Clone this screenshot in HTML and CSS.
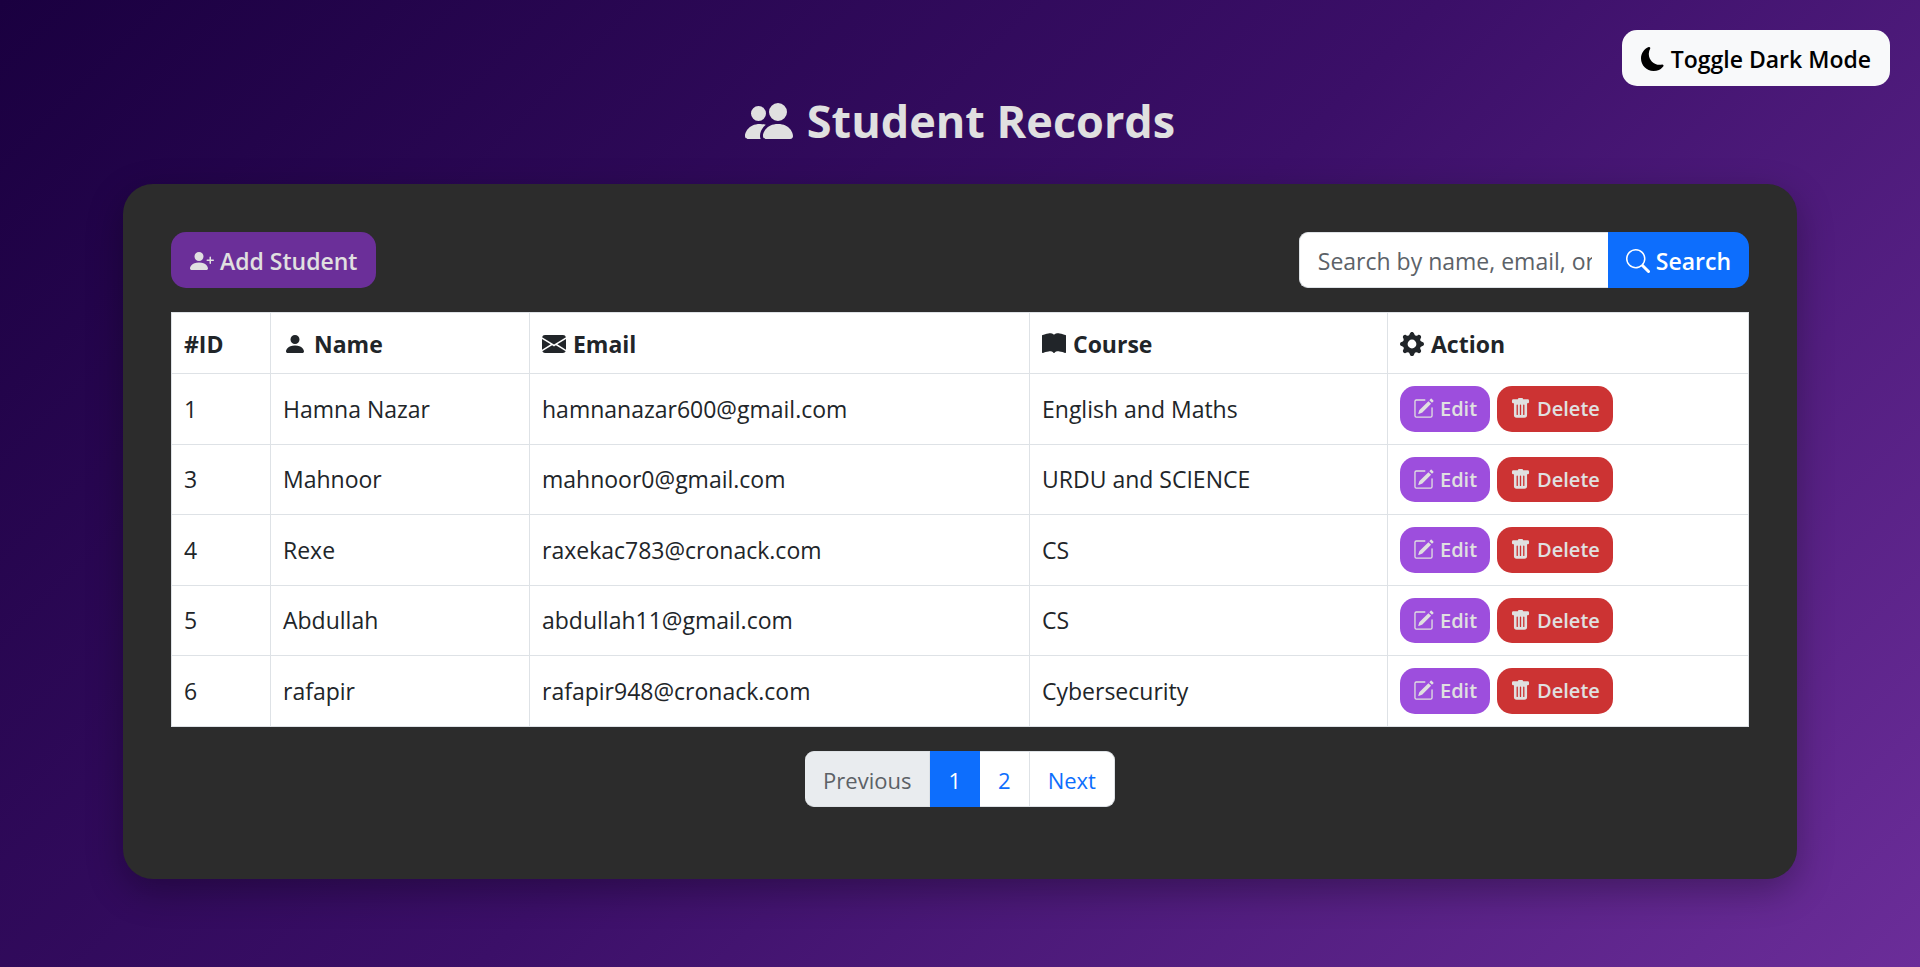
FILE: index.html
```
<!DOCTYPE html>
<html lang="en">
<head>
<meta charset="utf-8">
<title>Student Records</title>
<link rel="stylesheet" href="styles.css">
</head>
<body>
<svg class="sprite" aria-hidden="true">
  <symbol id="people" viewBox="0 0 16 16"><path d="M7 14s-1 0-1-1 1-4 5-4 5 3 5 4-1 1-1 1zm4-6a3 3 0 1 0 0-6 3 3 0 0 0 0 6m-5.784 6A2.24 2.24 0 0 1 5 13c0-1.355.68-2.75 1.936-3.72A6.3 6.3 0 0 0 5 9c-4 0-5 3-5 4s1 1 1 1zM4.5 8a2.5 2.5 0 1 0 0-5 2.5 2.5 0 0 0 0 5"/></symbol>
  <symbol id="moon" viewBox="0 0 16 16"><path d="M6 .278a.77.77 0 0 1 .08.858 7.2 7.2 0 0 0-.878 3.46c0 4.021 3.278 7.277 7.318 7.277q.792-.001 1.533-.16a.79.79 0 0 1 .81.316.73.73 0 0 1-.031.893A8.35 8.35 0 0 1 8.344 16C3.734 16 0 12.286 0 7.71 0 4.266 2.114 1.312 5.124.06A.75.75 0 0 1 6 .278"/></symbol>
  <symbol id="person-plus" viewBox="0 0 16 16"><path d="M1 14s-1 0-1-1 1-4 6-4 6 3 6 4-1 1-1 1zm5-6a3 3 0 1 0 0-6 3 3 0 0 0 0 6"/><path d="M13.5 5a.5.5 0 0 1 .5.5V7h1.5a.5.5 0 0 1 0 1H14v1.5a.5.5 0 0 1-1 0V8h-1.5a.5.5 0 0 1 0-1H13V5.5a.5.5 0 0 1 .5-.5"/></symbol>
  <symbol id="search" viewBox="0 0 16 16"><path d="M11.742 10.344a6.5 6.5 0 1 0-1.397 1.398h-.001q.044.06.098.115l3.85 3.85a1 1 0 0 0 1.415-1.414l-3.85-3.85a1 1 0 0 0-.115-.1zM12 6.5a5.5 5.5 0 1 1-11 0 5.5 5.5 0 0 1 11 0"/></symbol>
  <symbol id="person" viewBox="0 0 16 16"><path d="M3 14s-1 0-1-1 1-4 6-4 6 3 6 4-1 1-1 1zm5-6a3 3 0 1 0 0-6 3 3 0 0 0 0 6"/></symbol>
  <symbol id="envelope" viewBox="0 0 16 16"><path d="M.05 3.555A2 2 0 0 1 2 2h12a2 2 0 0 1 1.95 1.555L8 8.414zM0 4.697v7.104l5.803-3.558zM6.761 8.83l-6.57 4.027A2 2 0 0 0 2 14h12a2 2 0 0 0 1.808-1.144l-6.57-4.027L8 9.586zm3.436-.586L16 11.801V4.697z"/></symbol>
  <symbol id="book" viewBox="0 0 16 16"><path d="M8 1.783C7.015.936 5.587.81 4.287.94c-1.514.153-3.042.672-3.994 1.105A.5.5 0 0 0 0 2.5v11a.5.5 0 0 0 .707.455c.882-.4 2.303-.881 3.68-1.02 1.409-.142 2.59.087 3.223.877a.5.5 0 0 0 .78 0c.633-.79 1.814-1.019 3.222-.877 1.378.139 2.8.62 3.681 1.02A.5.5 0 0 0 16 13.5v-11a.5.5 0 0 0-.293-.455c-.952-.433-2.48-.952-3.994-1.105C10.413.809 8.985.936 8 1.783"/></symbol>
  <symbol id="gear" viewBox="0 0 16 16"><path d="M9.405 1.05c-.413-1.4-2.397-1.4-2.81 0l-.1.34a1.464 1.464 0 0 1-2.105.872l-.31-.17c-1.283-.698-2.686.705-1.987 1.987l.169.311c.446.82.023 1.841-.872 2.105l-.34.1c-1.4.413-1.4 2.397 0 2.81l.34.1a1.464 1.464 0 0 1 .872 2.105l-.17.31c-.698 1.283.705 2.686 1.987 1.987l.311-.169a1.464 1.464 0 0 1 2.105.872l.1.34c.413 1.4 2.397 1.4 2.81 0l.1-.34a1.464 1.464 0 0 1 2.105-.872l.31.17c1.283.698 2.686-.705 1.987-1.987l-.169-.311a1.464 1.464 0 0 1 .872-2.105l.34-.1c1.4-.413 1.4-2.397 0-2.81l-.34-.1a1.464 1.464 0 0 1-.872-2.105l.17-.31c.698-1.283-.705-2.686-1.987-1.987l-.311.169a1.464 1.464 0 0 1-2.105-.872zM8 10.93a2.929 2.929 0 1 1 0-5.86 2.929 2.929 0 0 1 0 5.858z"/></symbol>
  <symbol id="pencil" viewBox="0 0 16 16"><path d="M15.502 1.94a.5.5 0 0 1 0 .706L14.459 3.69l-2-2L13.502.646a.5.5 0 0 1 .707 0l1.293 1.293zm-1.75 2.456-2-2L4.939 9.21a.5.5 0 0 0-.121.196l-.805 2.414a.25.25 0 0 0 .316.316l2.414-.805a.5.5 0 0 0 .196-.12l6.813-6.814z"/><path fill-rule="evenodd" d="M1 13.5A1.5 1.5 0 0 0 2.5 15h11a1.5 1.5 0 0 0 1.5-1.5v-6a.5.5 0 0 0-1 0v6a.5.5 0 0 1-.5.5h-11a.5.5 0 0 1-.5-.5v-11a.5.5 0 0 1 .5-.5H9a.5.5 0 0 0 0-1H2.5A1.5 1.5 0 0 0 1 2.5z"/></symbol>
  <symbol id="trash" viewBox="0 0 16 16"><path d="M2.5 1a1 1 0 0 0-1 1v1a1 1 0 0 0 1 1H3v9a2 2 0 0 0 2 2h6a2 2 0 0 0 2-2V4h.5a1 1 0 0 0 1-1V2a1 1 0 0 0-1-1H10a1 1 0 0 0-1-1H7a1 1 0 0 0-1 1zm3 4a.5.5 0 0 1 .5.5v7a.5.5 0 0 1-1 0v-7a.5.5 0 0 1 .5-.5M8 5a.5.5 0 0 1 .5.5v7a.5.5 0 0 1-1 0v-7A.5.5 0 0 1 8 5m3 .5v7a.5.5 0 0 1-1 0v-7a.5.5 0 0 1 1 0"/></symbol>
</svg>

<button class="btn btn-light theme-toggle" type="button"><svg class="icon"><use href="#moon"/></svg> Toggle Dark Mode</button>

<main class="page">
  <h1 class="title"><svg class="icon"><use href="#people"/></svg> Student Records</h1>

  <section class="card">
    <div class="toolbar">
      <button class="btn btn-add" type="button"><svg class="icon"><use href="#person-plus"/></svg> Add Student</button>
      <form class="search">
        <input class="search-input" type="text" aria-label="Search students" placeholder="Search by name, email, or course">
        <button class="btn btn-search" type="submit"><svg class="icon"><use href="#search"/></svg> Search</button>
      </form>
    </div>

    <table class="records">
      <colgroup><col class="col-id"><col class="col-name"><col class="col-email"><col class="col-course"><col class="col-action"></colgroup>
      <thead>
        <tr>
          <th scope="col">#ID</th>
          <th scope="col"><svg class="icon"><use href="#person"/></svg> Name</th>
          <th scope="col"><svg class="icon"><use href="#envelope"/></svg> Email</th>
          <th scope="col"><svg class="icon"><use href="#book"/></svg> Course</th>
          <th scope="col"><svg class="icon"><use href="#gear"/></svg> Action</th>
        </tr>
      </thead>
      <tbody>
        <tr>
          <td>1</td><td>Hamna Nazar</td><td>hamnanazar600@gmail.com</td><td>English and Maths</td>
          <td><div class="actions"><button class="btn btn-sm btn-edit" type="button"><svg class="icon"><use href="#pencil"/></svg> Edit</button><button class="btn btn-sm btn-delete" type="button"><svg class="icon"><use href="#trash"/></svg> Delete</button></div></td>
        </tr>
        <tr>
          <td>3</td><td>Mahnoor</td><td>mahnoor0@gmail.com</td><td>URDU and SCIENCE</td>
          <td><div class="actions"><button class="btn btn-sm btn-edit" type="button"><svg class="icon"><use href="#pencil"/></svg> Edit</button><button class="btn btn-sm btn-delete" type="button"><svg class="icon"><use href="#trash"/></svg> Delete</button></div></td>
        </tr>
        <tr>
          <td>4</td><td>Rexe</td><td>raxekac783@cronack.com</td><td>CS</td>
          <td><div class="actions"><button class="btn btn-sm btn-edit" type="button"><svg class="icon"><use href="#pencil"/></svg> Edit</button><button class="btn btn-sm btn-delete" type="button"><svg class="icon"><use href="#trash"/></svg> Delete</button></div></td>
        </tr>
        <tr>
          <td>5</td><td>Abdullah</td><td>abdullah11@gmail.com</td><td>CS</td>
          <td><div class="actions"><button class="btn btn-sm btn-edit" type="button"><svg class="icon"><use href="#pencil"/></svg> Edit</button><button class="btn btn-sm btn-delete" type="button"><svg class="icon"><use href="#trash"/></svg> Delete</button></div></td>
        </tr>
        <tr>
          <td>6</td><td>rafapir</td><td>rafapir948@cronack.com</td><td>Cybersecurity</td>
          <td><div class="actions"><button class="btn btn-sm btn-edit" type="button"><svg class="icon"><use href="#pencil"/></svg> Edit</button><button class="btn btn-sm btn-delete" type="button"><svg class="icon"><use href="#trash"/></svg> Delete</button></div></td>
        </tr>
      </tbody>
    </table>

    <nav class="pagination" aria-label="Pages">
      <a class="page-link disabled" aria-disabled="true">Previous</a>
      <a class="page-link active" href="#1" aria-current="page">1</a>
      <a class="page-link" href="#2">2</a>
      <a class="page-link" href="#next">Next</a>
    </nav>
  </section>
</main>
</body>
</html>
```
FILE: styles.css
```
* { box-sizing: border-box; }

body {
  margin: 0;
  min-height: 100vh;
  background: linear-gradient(135deg, #1a0040, #3b0f68 50%, #6b2d99);
  color: #e0e0e0;
  font-family: "Segoe UI", "Open Sans", "Noto Sans", sans-serif;
  font-size: 23px;
  line-height: 36px;
}

.sprite { display: none; }

.icon {
  flex: none;
  width: 24px;
  height: 24px;
  fill: currentColor;
}

.btn {
  display: inline-flex;
  align-items: center;
  gap: 6px;
  padding: 11px 19px 9px;
  border: 0;
  border-radius: 15px;
  font: inherit;
  font-weight: 600;
  white-space: nowrap;
  cursor: pointer;
}

.theme-toggle {
  position: fixed;
  top: 30px;
  right: 30px;
}

.btn-light { background: #f8f9fa; color: #000; }
.btn-add { background: #6b2f99; color: #e0e0e0; }

.page {
  width: 1674px;
  max-width: calc(100% - 48px);
  margin: 0 auto;
  padding: 92px 0 48px;
}

.title {
  display: flex;
  align-items: center;
  justify-content: center;
  gap: 14px;
  margin: 0 0 34px;
  font-size: 45px;
  line-height: 58px;
  font-weight: 700;
}

.title .icon { width: 48px; height: 48px; }

.card {
  padding: 48px 48px 72px;
  border-radius: 30px;
  background: #2c2c2c;
  box-shadow: 0 12px 36px rgba(0, 0, 0, 0.3);
}

.toolbar {
  display: flex;
  justify-content: space-between;
  margin-bottom: 24px;
}

.search { display: flex; }

.search-input {
  width: 309px;
  padding: 10px 16px 8px 18px;
  border: 1px solid #dee2e6;
  border-right: 0;
  border-radius: 9px 0 0 9px;
  background: #fff;
  color: #212529;
  font: inherit;
}

.search-input::placeholder { color: #5c6268; }

.btn-search {
  padding-left: 18px;
  padding-right: 18px;
  border-radius: 0 15px 15px 0;
  background: #0d6efd;
  color: #fff;
}

.records {
  width: 100%;
  table-layout: fixed;
  border-collapse: collapse;
  background: #fff;
  color: #212529;
}

.col-id { width: 99px; }
.col-name { width: 259px; }
.col-email { width: 500px; }
.col-course { width: 358px; }

.records th,
.records td {
  padding: 12px;
  border: 1px solid #dee2e6;
  text-align: left;
}

.records th {
  padding: 13px 12px 11px;
  font-weight: 700;
}

.records th .icon {
  margin-right: 1px;
  vertical-align: -3px;
}

.actions { display: flex; gap: 7px; }

.btn-sm {
  padding: 7px 13px;
  font-size: 20px;
  font-weight: 600;
  line-height: 1.575;
}

.btn-sm .icon { width: 21px; height: 21px; }

.btn-edit { background: #9d4edd; color: #e0e0e0; }
.btn-delete { background: #cc3333; color: #e0e0e0; }

.pagination {
  display: flex;
  justify-content: center;
  margin-top: 24px;
  font-size: 22px;
}

.page-link {
  padding: 10px 18px 8px;
  border: 1px solid #dee2e6;
  border-left-width: 0;
  background: #fff;
  color: #0d6efd;
  text-decoration: none;
}

.page-link:first-child { border-radius: 9px 0 0 9px; }
.page-link:last-child { border-radius: 0 9px 9px 0; }
.page-link.disabled { background: #e9ecef; color: #5c6166; }
.page-link.active { border-color: #0d6efd; background: #0d6efd; color: #fff; }
```
